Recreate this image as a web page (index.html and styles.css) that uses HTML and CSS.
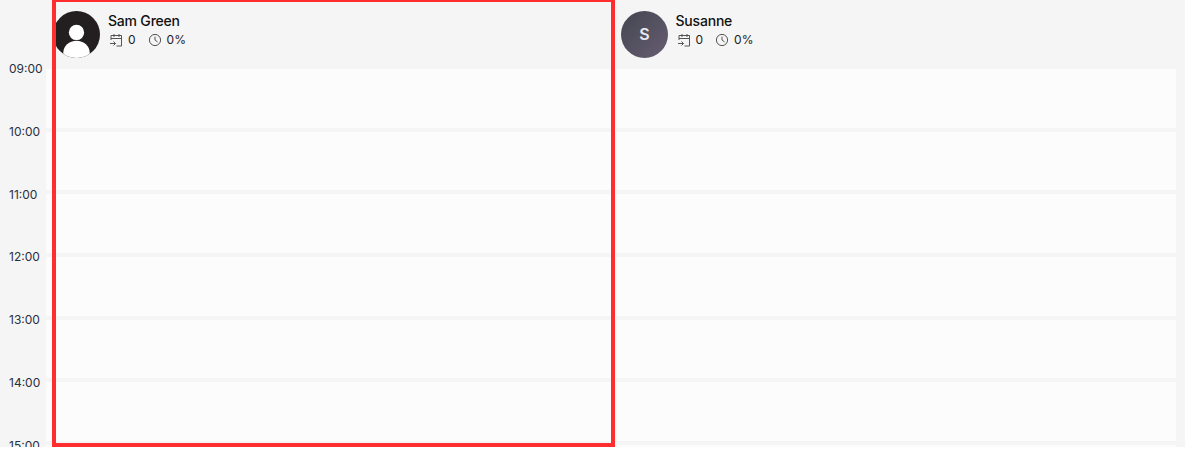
FILE: index.html
```html
<!DOCTYPE html>
<html lang="en">
<head>
    <meta charset="UTF-8">
    <meta name="viewport" content="width=device-width, initial-scale=1.0">
    <title>Calendar</title>
    <link rel="stylesheet" href="styles.css">
</head>
<body>
    <div class="calendar">
        <div class="times">
            <span class="time">09:00</span>
            <span class="time">10:00</span>
            <span class="time">11:00</span>
            <span class="time">12:00</span>
            <span class="time">13:00</span>
            <span class="time">14:00</span>
            <span class="time">15:00</span>
        </div>

        <div class="column">
            <div class="staff-header">
                <svg class="avatar" viewBox="0 0 46 46">
                    <defs><clipPath id="avatarClip"><circle cx="23" cy="23" r="23"/></clipPath></defs>
                    <g clip-path="url(#avatarClip)">
                        <rect width="46" height="46" fill="#231f20"/>
                        <circle cx="23" cy="21" r="7.5" fill="#fff"/>
                        <ellipse cx="23" cy="41" rx="13" ry="12" fill="#fff"/>
                    </g>
                </svg>
                <div class="staff-info">
                    <div class="staff-name">Sam Green</div>
                    <div class="staff-stats">
                        <span class="stat">
                            <svg class="stat-icon" viewBox="0 0 14 14"><path d="M2 7V2.5h10.5V13H7.5M2 5.5h10.5M5 1v3M10 1v3M1 10.5h5.5M4.5 8.5 6.5 10.5 4.5 12.5"/></svg>
                            0
                        </span>
                        <span class="stat">
                            <svg class="stat-icon" viewBox="0 0 14 14"><circle cx="7" cy="7" r="5.6"/><path d="M7 3.6V7l2.6 2"/></svg>
                            0%
                        </span>
                    </div>
                </div>
            </div>
            <div class="slots">
                <div class="slot"></div>
                <div class="slot"></div>
                <div class="slot"></div>
                <div class="slot"></div>
                <div class="slot"></div>
                <div class="slot"></div>
                <div class="slot"></div>
            </div>
            <div class="selected-frame"></div>
        </div>

        <div class="column">
            <div class="staff-header">
                <div class="avatar avatar-letter">S</div>
                <div class="staff-info">
                    <div class="staff-name">Susanne</div>
                    <div class="staff-stats">
                        <span class="stat">
                            <svg class="stat-icon" viewBox="0 0 14 14"><path d="M2 7V2.5h10.5V13H7.5M2 5.5h10.5M5 1v3M10 1v3M1 10.5h5.5M4.5 8.5 6.5 10.5 4.5 12.5"/></svg>
                            0
                        </span>
                        <span class="stat">
                            <svg class="stat-icon" viewBox="0 0 14 14"><circle cx="7" cy="7" r="5.6"/><path d="M7 3.6V7l2.6 2"/></svg>
                            0%
                        </span>
                    </div>
                </div>
            </div>
            <div class="slots">
                <div class="slot"></div>
                <div class="slot"></div>
                <div class="slot"></div>
                <div class="slot"></div>
                <div class="slot"></div>
                <div class="slot"></div>
                <div class="slot"></div>
            </div>
        </div>
    </div>
</body>
</html>
```

FILE: styles.css
```css
html, body {
    margin: 0;
    padding: 0;
    background: #fff;
}
.calendar {
    display: flex;
    width: 1185px;
    height: 447px;
    overflow: hidden;
    background: #f5f5f5;
    font-family: Inter, "Liberation Sans", sans-serif;
    color: #111;
}
.times {
    width: 46px;
    flex: none;
    padding-top: 62.4px;
    display: flex;
    flex-direction: column;
    gap: 48.7px;
}
.time {
    height: 14px;
    line-height: 14px;
    font-size: 12px;
    padding-left: 9px;
    color: #27303f;
    white-space: nowrap;
}
.column {
    position: relative;
    width: 566px;
    flex: none;
}
.column + .column {
    margin-left: 4px;
    width: 560px;
}
.staff-header {
    height: 69px;
    box-sizing: border-box;
    padding: 11px 0 0 7px;
    display: flex;
    gap: 8px;
}
.column + .column .staff-header {
    padding-left: 5px;
    gap: 7.5px;
}
.avatar {
    width: 47px;
    height: 47px;
    flex: none;
}
.avatar-letter {
    border-radius: 50%;
    background: linear-gradient(135deg, #43464f, #675d73);
    color: #e8e8ee;
    font-size: 16px;
    font-weight: 600;
    line-height: 47px;
    text-align: center;
}
.staff-info {
    padding-top: 1px;
}
.staff-name {
    font-size: 14px;
    line-height: 17px;
    font-weight: 500;
    letter-spacing: -0.2px;
}
.staff-stats {
    display: flex;
    gap: 12px;
    margin: 3px 0 0 1px;
    font-size: 12px;
    line-height: 15px;
    color: #222;
}
.stat {
    display: flex;
    align-items: center;
    gap: 5px;
}
.stat-icon {
    width: 14px;
    height: 14px;
    fill: none;
    stroke: #555;
    stroke-width: 1;
}
.slots {
    display: flex;
    flex-direction: column;
    gap: 4px;
}
.slot {
    height: 58.7px;
    flex: none;
    background: #fcfcfc;
}
.selected-frame {
    position: absolute;
    left: 6px;
    top: -2px;
    width: 563px;
    height: 449px;
    box-sizing: border-box;
    border: 4px solid #ff2d2d;
}
```
